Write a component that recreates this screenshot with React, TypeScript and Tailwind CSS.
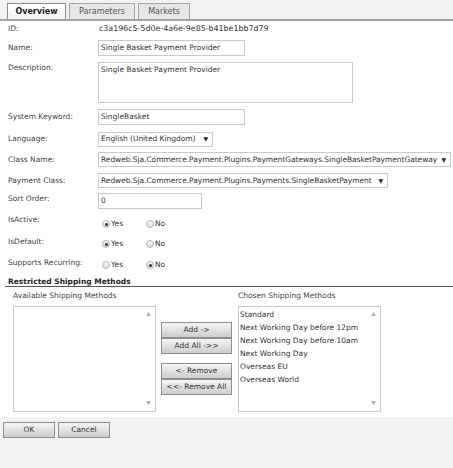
import React from "react";

const font = "font-['DejaVu_Sans',sans-serif]";

const chosen = [
  "Standard",
  "Next Working Day before 12pm",
  "Next Working Day before 10am",
  "Next Working Day",
  "Overseas EU",
  "Overseas World",
];

function Tab({ label, active, w }: { label: string; active?: boolean; w: string }) {
  return (
    <div
      className={`${w} h-[16px] flex items-center justify-center border border-b-0 text-[8px] leading-none ${
        active
          ? "bg-gradient-to-b from-white to-[#f3f3f3] border-[#8c8c8c] font-bold text-[#222]"
          : "bg-[#e6e6e6] border-[#a6a6a6] text-[#555]"
      }`}
    >
      {label}
    </div>
  );
}

function Label({ children, className = "" }: { children: React.ReactNode; className?: string }) {
  return <div className={`w-[90px] shrink-0 text-[7.5px] leading-[10px] text-[#444] ${className}`}>{children}</div>;
}

function TextBox({ value, w, h = "h-[16px]" }: { value: string; w: string; h?: string }) {
  return (
    <div className={`${w} ${h} border border-[#c9c9c9] bg-white pl-[2px] flex items-center text-[7.5px] text-[#333] leading-none`}>
      {value}
    </div>
  );
}

function Select({ value, w }: { value: string; w: string }) {
  return (
    <div className={`${w} h-[15px] border border-[#c9c9c9] bg-white pl-[2px] pr-[4px] flex items-center justify-between text-[7.5px] text-[#333] leading-none`}>
      <span className="tracking-[-0.05px] whitespace-nowrap">{value}</span>
      <span className="text-[6px] text-[#222] ml-[3px]">▼</span>
    </div>
  );
}

function Radio({ checked, label }: { checked?: boolean; label: string }) {
  return (
    <div className="flex items-center w-[44px] text-[7.5px] text-[#333] leading-none">
      <span className="w-[8px] h-[8px] rounded-full border border-[#b5b5b5] bg-gradient-to-b from-[#f7f7f7] to-[#dcdcdc] flex items-center justify-center mr-[1px]">
        {checked && <span className="w-[3px] h-[3px] rounded-full bg-[#333]" />}
      </span>
      {label}
    </div>
  );
}

function RadioRow({ label, yes, offset, mt }: { label: string; yes: boolean; offset: string; mt: string }) {
  return (
    <div className={`flex items-start h-[20px] ${mt}`}>
      <Label>{label}</Label>
      <div className={`flex pl-[4px] ${offset}`}>
        <Radio checked={yes} label="Yes" />
        <Radio checked={!yes} label="No" />
      </div>
    </div>
  );
}

function ListBox({ items }: { items: string[] }) {
  return (
    <div className="relative w-[143px] h-[106px] border border-[#c9c9c9] bg-white">
      <div className="pl-[1px] pt-[1px]">
        {items.map((it) => (
          <div key={it} className="h-[13px] flex items-center text-[7.5px] text-[#333] leading-none">
            {it}
          </div>
        ))}
      </div>
      <svg className="absolute right-[4px] top-[5px]" width="5" height="4" viewBox="0 0 5 4">
        <path d="M2.5 0 L5 4 L0 4 Z" fill="#b0b0b0" />
      </svg>
      <svg className="absolute right-[4px] bottom-[6px]" width="5" height="4" viewBox="0 0 5 4">
        <path d="M0 0 L5 0 L2.5 4 Z" fill="#b0b0b0" />
      </svg>
    </div>
  );
}

function Btn({ children, w, h = "h-[16px]" }: { children: React.ReactNode; w: string; h?: string }) {
  return (
    <div
      className={`${w} ${h} border border-[#8e8e8e] bg-gradient-to-b from-[#f6f6f6] to-[#cdcdcd] flex items-center justify-center text-[7.5px] text-[#333] leading-none`}
    >
      {children}
    </div>
  );
}

export default function App() {
  return (
    <div className={`w-[453px] h-[468px] bg-[#f2f2f2] ${font} overflow-hidden`}>
      {/* tabs */}
      <div className="h-[21px] pt-[3px] pl-[7px] flex gap-[3px] border-b-2 border-[#a3a3a3]">
        <Tab label="Overview" active w="w-[59px]" />
        <Tab label="Parameters" w="w-[66px]" />
        <Tab label="Markets" w="w-[52px]" />
      </div>

      <div className="bg-white pb-[5px]">
        <div className="pl-[8px]">
          <div className="flex h-[16px] items-center">
            <Label>ID:</Label>
            <div className="text-[7.9px] leading-none text-[#333] pl-[1px]">c3a196c5-5d0e-4a6e-9e85-b41be1bb7d79</div>
          </div>
          <div className="flex h-[16px] items-center mt-[3px]">
            <Label>Name:</Label>
            <TextBox value="Single Basket Payment Provider" w="w-[147px]" />
          </div>
          <div className="flex mt-[6px]">
            <Label className="pt-[1px]">Description:</Label>
            <div className="w-[255px] h-[41px] border border-[#c9c9c9] bg-white pl-[2px] pt-[3px] text-[7.5px] text-[#333] leading-none">
              Single Basket Payment Provider
            </div>
          </div>
          <div className="flex h-[16px] items-center mt-[6px]">
            <Label>System Keyword:</Label>
            <TextBox value="SingleBasket" w="w-[147px]" />
          </div>
          <div className="flex h-[16px] items-center mt-[6px]">
            <Label>Language:</Label>
            <Select value="English (United Kingdom)" w="w-[115px]" />
          </div>
          <div className="flex h-[15px] items-center mt-[5px]">
            <Label>Class Name:</Label>
            <Select value="Redweb.Sja.Commerce.Payment.Plugins.PaymentGateways.SingleBasketPaymentGateway" w="w-[353px]" />
          </div>
          <div className="flex h-[15px] items-center mt-[6px]">
            <Label>Payment Class:</Label>
            <Select value="Redweb.Sja.Commerce.Payment.Plugins.Payments.SingleBasketPayment" w="w-[290px]" />
          </div>
          <div className="flex h-[16px] mt-[5px]">
            <Label className="pt-[1px]">Sort Order:</Label>
            <TextBox value="0" w="w-[104px]" />
          </div>
          <RadioRow label="IsActive:" yes offset="mt-[5px]" mt="mt-[6px]" />
          <RadioRow label="IsDefault:" yes offset="mt-[3px]" mt="mt-[2px]" />
          <RadioRow label="Supports Recurring:" yes={false} offset="mt-[3px]" mt="mt-[1px]" />
        </div>

        <div className="ml-[5px] -mt-[1px] h-[10px] border-b border-[#555] pl-[3px] text-[7.5px] leading-[9px] font-bold text-[#222]">
          Restricted Shipping Methods
        </div>

        <div className="flex pl-[13px] mt-[4px]">
          <div>
            <div className="text-[7.5px] leading-[10px] text-[#444]">Available Shipping Methods</div>
            <div className="mt-[5px]">
              <ListBox items={[]} />
            </div>
          </div>
          <div className="pl-[5px] pt-[31px]">
            <Btn w="w-[71px]">Add -&gt;</Btn>
            <Btn w="w-[71px]">Add All -&gt;&gt;</Btn>
            <div className="h-[9px]" />
            <Btn w="w-[71px]">&lt;- Remove</Btn>
            <Btn w="w-[71px]">&lt;&lt;- Remove All</Btn>
          </div>
          <div className="pl-[6px]">
            <div className="text-[7.5px] leading-[10px] text-[#444]">Chosen Shipping Methods</div>
            <div className="mt-[5px]">
              <ListBox items={chosen} />
            </div>
          </div>
        </div>
      </div>

      <div className="flex gap-[3px] pl-[3px] pt-[5px]">
        <Btn w="w-[52px]">OK</Btn>
        <Btn w="w-[52px]">Cancel</Btn>
      </div>
    </div>
  );
}
